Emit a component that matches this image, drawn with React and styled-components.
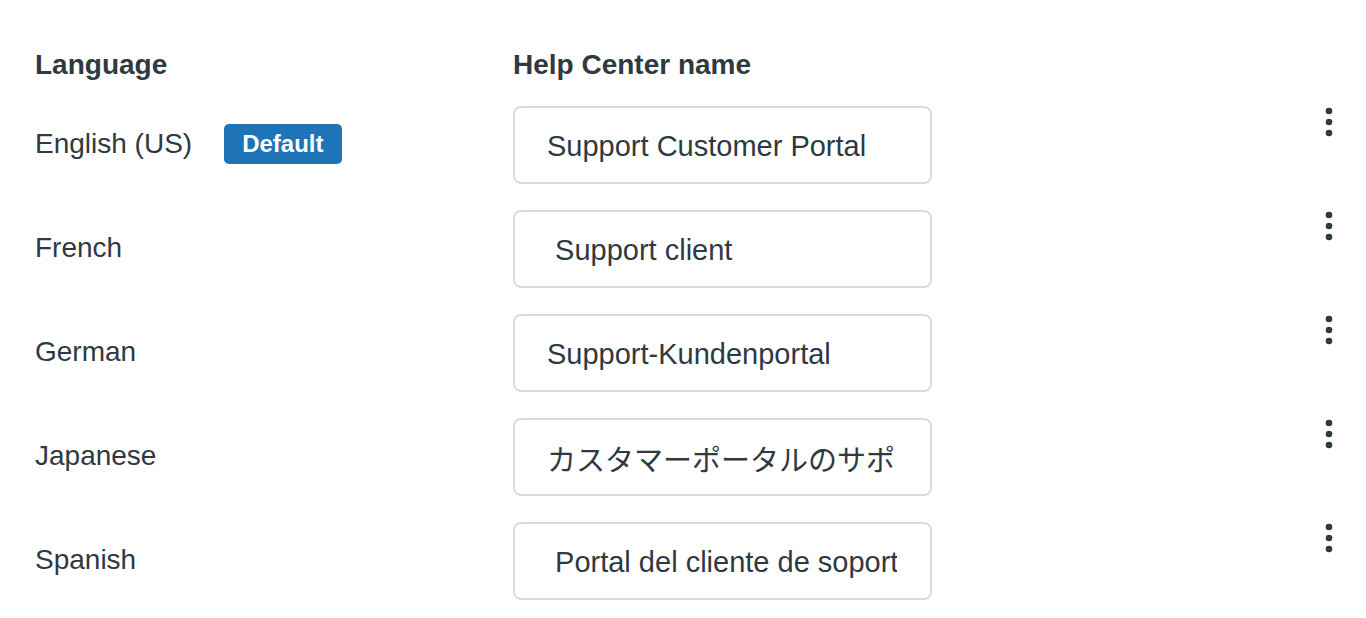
import React from "react";
import styled, { createGlobalStyle } from "styled-components";

const Global = createGlobalStyle`
  html, body { margin: 0; padding: 0; background: #ffffff; }
  body {
    font-family: "Liberation Sans", Arial, "Noto Sans CJK JP", sans-serif;
    color: #2f3941;
  }
`;

const Page = styled.div`
  padding: 45px 33px 0 35px;
  display: flex;
  flex-direction: column;
`;

const Header = styled.div`
  display: grid;
  grid-template-columns: 478px 419px 1fr 8px;
  align-items: center;
  margin-bottom: 21px;
`;

const Rows = styled.div`
  display: flex;
  flex-direction: column;
  gap: 26px;
`;

const Row = styled.div`
  display: grid;
  grid-template-columns: 478px 419px 1fr 8px;
  align-items: center;
`;

const HeaderCell = styled.div`
  font-size: 28px;
  font-weight: 700;
  line-height: 40px;
  color: #2f3941;
`;

const LangCell = styled.div`
  display: flex;
  align-items: center;
  gap: 32px;
  font-size: 28px;
  line-height: 40px;
  color: #2f3941;
  margin-top: -3px;
`;

const Badge = styled.span`
  display: inline-flex;
  align-items: center;
  justify-content: center;
  height: 40px;
  padding: 0 18px;
  border-radius: 5px;
  background: #1f73b7;
  color: #ffffff;
  font-size: 24px;
  font-weight: 700;
  box-sizing: border-box;
`;

const NameInput = styled.input`
  box-sizing: border-box;
  width: 419px;
  height: 78px;
  padding: 2px 33px 0 32px;
  border: 2px solid #d8dcde;
  border-radius: 8px;
  background: #ffffff;
  font-family: "Liberation Sans", Arial, "Noto Sans CJK JP", sans-serif;
  font-size: 29px;
  color: #2f3941;
  outline: none;
`;

const KebabButton = styled.button`
  align-self: start;
  justify-self: center;
  margin-top: 1px;
  width: 8px;
  height: 30px;
  padding: 0;
  border: 0;
  background: transparent;
  display: flex;
  justify-content: center;
  cursor: pointer;
  color: #2f3941;
`;

const Spacer = styled.div``;

const Kebab = () => (
  <KebabButton aria-label="More options">
    <svg width="8" height="30" viewBox="0 0 8 30">
      <circle cx="4" cy="4" r="3.3" fill="currentColor" />
      <circle cx="4" cy="15" r="3.3" fill="currentColor" />
      <circle cx="4" cy="26" r="3.3" fill="currentColor" />
    </svg>
  </KebabButton>
);

const rows = [
  { lang: "English (US)", name: "Support Customer Portal", isDefault: true },
  { lang: "French", name: " Support client" },
  { lang: "German", name: "Support-Kundenportal" },
  { lang: "Japanese", name: "カスタマーポータルのサポート" },
  { lang: "Spanish", name: " Portal del cliente de soporte" },
];

export default function App() {
  return (
    <>
      <Global />
      <Page>
        <Header>
          <HeaderCell>Language</HeaderCell>
          <HeaderCell>Help Center name</HeaderCell>
          <Spacer />
          <Spacer />
        </Header>
        <Rows>
          {rows.map((r) => (
            <Row key={r.lang}>
              <LangCell>
                <span>{r.lang}</span>
                {r.isDefault && <Badge>Default</Badge>}
              </LangCell>
              <NameInput defaultValue={r.name} />
              <Spacer />
              <Kebab />
            </Row>
          ))}
        </Rows>
      </Page>
    </>
  );
}
